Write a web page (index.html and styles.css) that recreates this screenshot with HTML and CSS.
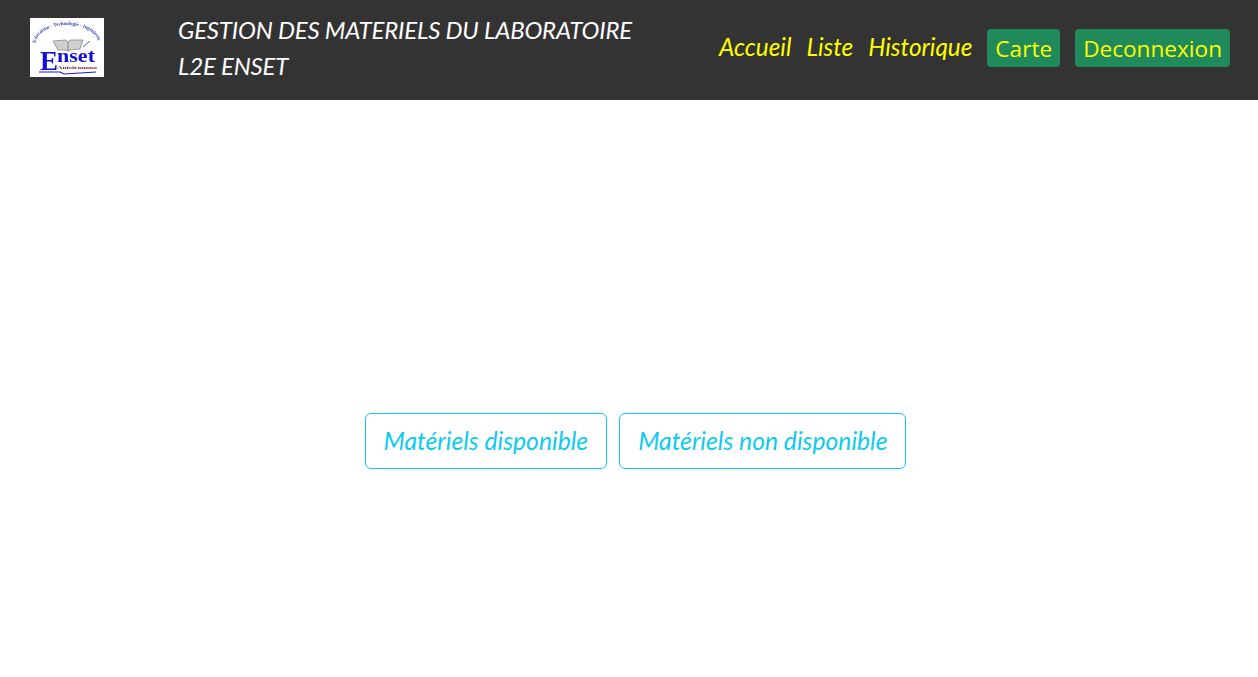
FILE: index.html
```html
<!DOCTYPE html>
<html lang="fr">
<head>
<meta charset="utf-8">
<title>Gestion des matériels</title>
<link rel="stylesheet" href="styles.css">
</head>
<body>
<header class="topbar">
  <div class="logo">
    <svg width="74" height="59" viewBox="0 0 74 59">
      <rect width="74" height="59" fill="#fff"/>
      <defs><path id="arc" d="M6 25 A 31 18 0 0 1 68 25"/></defs>
      <text class="logo-arc"><textPath href="#arc" textLength="76" lengthAdjust="spacingAndGlyphs">Education - Technologie - Ingénierie</textPath></text>
      <path d="M23 23 L36 22 L38 24 L40 22 L53 22 L50 31 L40 32 L38 33 L36 32 L28 32 Z" fill="#cfcfcf" stroke="#8a8a8a" stroke-width=".8"/>
      <path d="M38 24 L38 33" stroke="#777" stroke-width=".8"/>
      <path d="M53 29 L60 23" stroke="#3a6fd0" stroke-width="1"/>
      <text class="logo-big" x="10" y="52">E</text>
      <text class="logo-name" x="27" y="44" textLength="38" lengthAdjust="spacingAndGlyphs">nset</text>
      <text class="logo-small" x="27" y="51" textLength="40" lengthAdjust="spacingAndGlyphs">Antsiranana</text>
      <path d="M9 54 L30 54 L34 56 L66 54" fill="none" stroke="#1a1ad8" stroke-width="1.2"/>
    </svg>
  </div>
  <div class="title">
    <div>GESTION DES MATERIELS DU LABORATOIRE</div>
    <div>L2E ENSET</div>
  </div>
  <nav class="nav">
    <a class="nav-link">Accueil</a>
    <a class="nav-link">Liste</a>
    <a class="nav-link">Historique</a>
    <a class="nav-btn">Carte</a>
    <a class="nav-btn">Deconnexion</a>
  </nav>
</header>
<main class="content">
  <a class="outline-btn">Matériels disponible</a>
  <a class="outline-btn">Matériels non disponible</a>
</main>
</body>
</html>
```
FILE: styles.css
```css
* { box-sizing: border-box; }
html, body { margin: 0; padding: 0; height: 100%; background: #fff; }
body { font-family: "Lato", "Noto Sans", sans-serif; overflow: hidden; }
.topbar {
  height: 100px;
  background: #333;
  display: flex;
  align-items: center;
  padding: 0 28px 0 30px;
}
.logo { width: 74px; height: 59px; margin-top: -5px; flex: none; }
.logo svg { display: block; filter: blur(.3px); }
.logo-arc { font: bold 5px "Liberation Serif", serif; fill: #2a3ab8; }
.logo-big { font: bold 27px "Liberation Serif", serif; fill: #1010d8; }
.logo-name { font: bold 19px "Liberation Serif", serif; fill: #1010d8; }
.logo-small { font: bold 5px "Liberation Serif", serif; fill: #8a2020; }
.title {
  margin-left: 74px;
  color: #fff;
  font-style: italic;
  font-size: 24px;
  line-height: 36px;
  letter-spacing: -0.2px;
  margin-top: -5px;
}
.nav { margin-left: auto; display: flex; align-items: center; gap: 15px; margin-top: -4px; }
.nav-link { color: #ff0; font-style: italic; font-size: 24.3px; line-height: 36px; position: relative; top: -1px; }
.nav-btn {
  color: #ff0;
  background: #218a5a;
  font-family: "Open Sans", "Noto Sans", sans-serif;
  font-size: 22.6px;
  line-height: 30px;
  padding: 5px 8px 3px;
  border-radius: 4px;
}
.content {
  display: flex;
  justify-content: center;
  gap: 12px;
  padding: 313px 0 0 13px;
}
.outline-btn {
  color: #0dcaf0;
  border: 1px solid #0dcaf0;
  border-radius: 6px;
  font-style: italic;
  font-size: 24.7px;
  line-height: 36px;
  padding: 9px 18px;
}
```
